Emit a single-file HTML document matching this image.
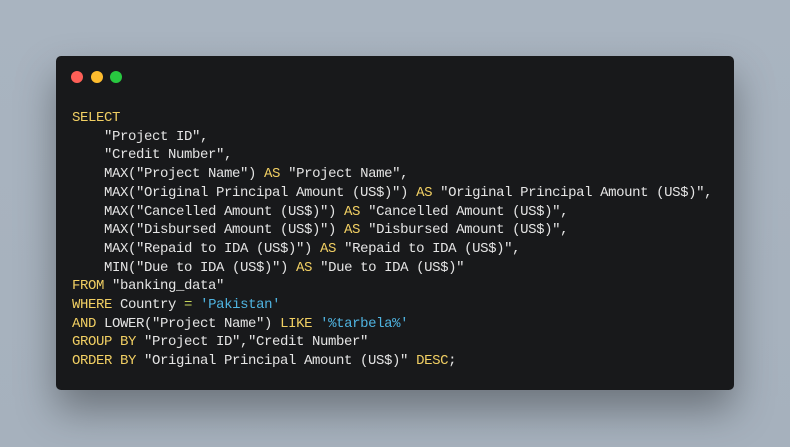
<!DOCTYPE html>
<html><head><meta charset="utf-8"><style>
html,body{margin:0;padding:0}
body{width:790px;height:447px;background:linear-gradient(180deg,#a9b4c0,#a6b1bd);position:relative;overflow:hidden}
.card{position:absolute;left:56px;top:56px;width:678px;height:334px;background:#18191b;border-radius:5px;box-shadow:0 20px 40px rgba(0,0,0,0.35)}
.dot{position:absolute;top:71px;width:12px;height:12px;border-radius:50%}
pre{position:absolute;left:72px;top:109px;margin:0;font-family:"Liberation Mono",monospace;font-size:14px;letter-spacing:-0.4px;line-height:18.7px;color:#e4e4e4;white-space:pre}
.k{color:#f1cf63}.s{color:#4fb3e0}.o{color:#c7d65c}
</style></head><body>
<div class="card"></div>
<div class="dot" style="left:71px;background:#fd5f57"></div>
<div class="dot" style="left:91px;background:#febc2e"></div>
<div class="dot" style="left:110px;background:#28c840"></div>
<pre><span class="k">SELECT</span>
    "Project ID",
    "Credit Number",
    MAX("Project Name") <span class="k">AS</span> "Project Name",
    MAX("Original Principal Amount (US$)") <span class="k">AS</span> "Original Principal Amount (US$)",
    MAX("Cancelled Amount (US$)") <span class="k">AS</span> "Cancelled Amount (US$)",
    MAX("Disbursed Amount (US$)") <span class="k">AS</span> "Disbursed Amount (US$)",
    MAX("Repaid to IDA (US$)") <span class="k">AS</span> "Repaid to IDA (US$)",
    MIN("Due to IDA (US$)") <span class="k">AS</span> "Due to IDA (US$)"
<span class="k">FROM</span> "banking_data"
<span class="k">WHERE</span> Country <span class="o">=</span> <span class="s">'Pakistan'</span>
<span class="k">AND</span> LOWER("Project Name") <span class="k">LIKE</span> <span class="s">'%tarbela%'</span>
<span class="k">GROUP BY</span> "Project ID","Credit Number"
<span class="k">ORDER BY</span> "Original Principal Amount (US$)" <span class="k">DESC</span>;</pre>
</body></html>
